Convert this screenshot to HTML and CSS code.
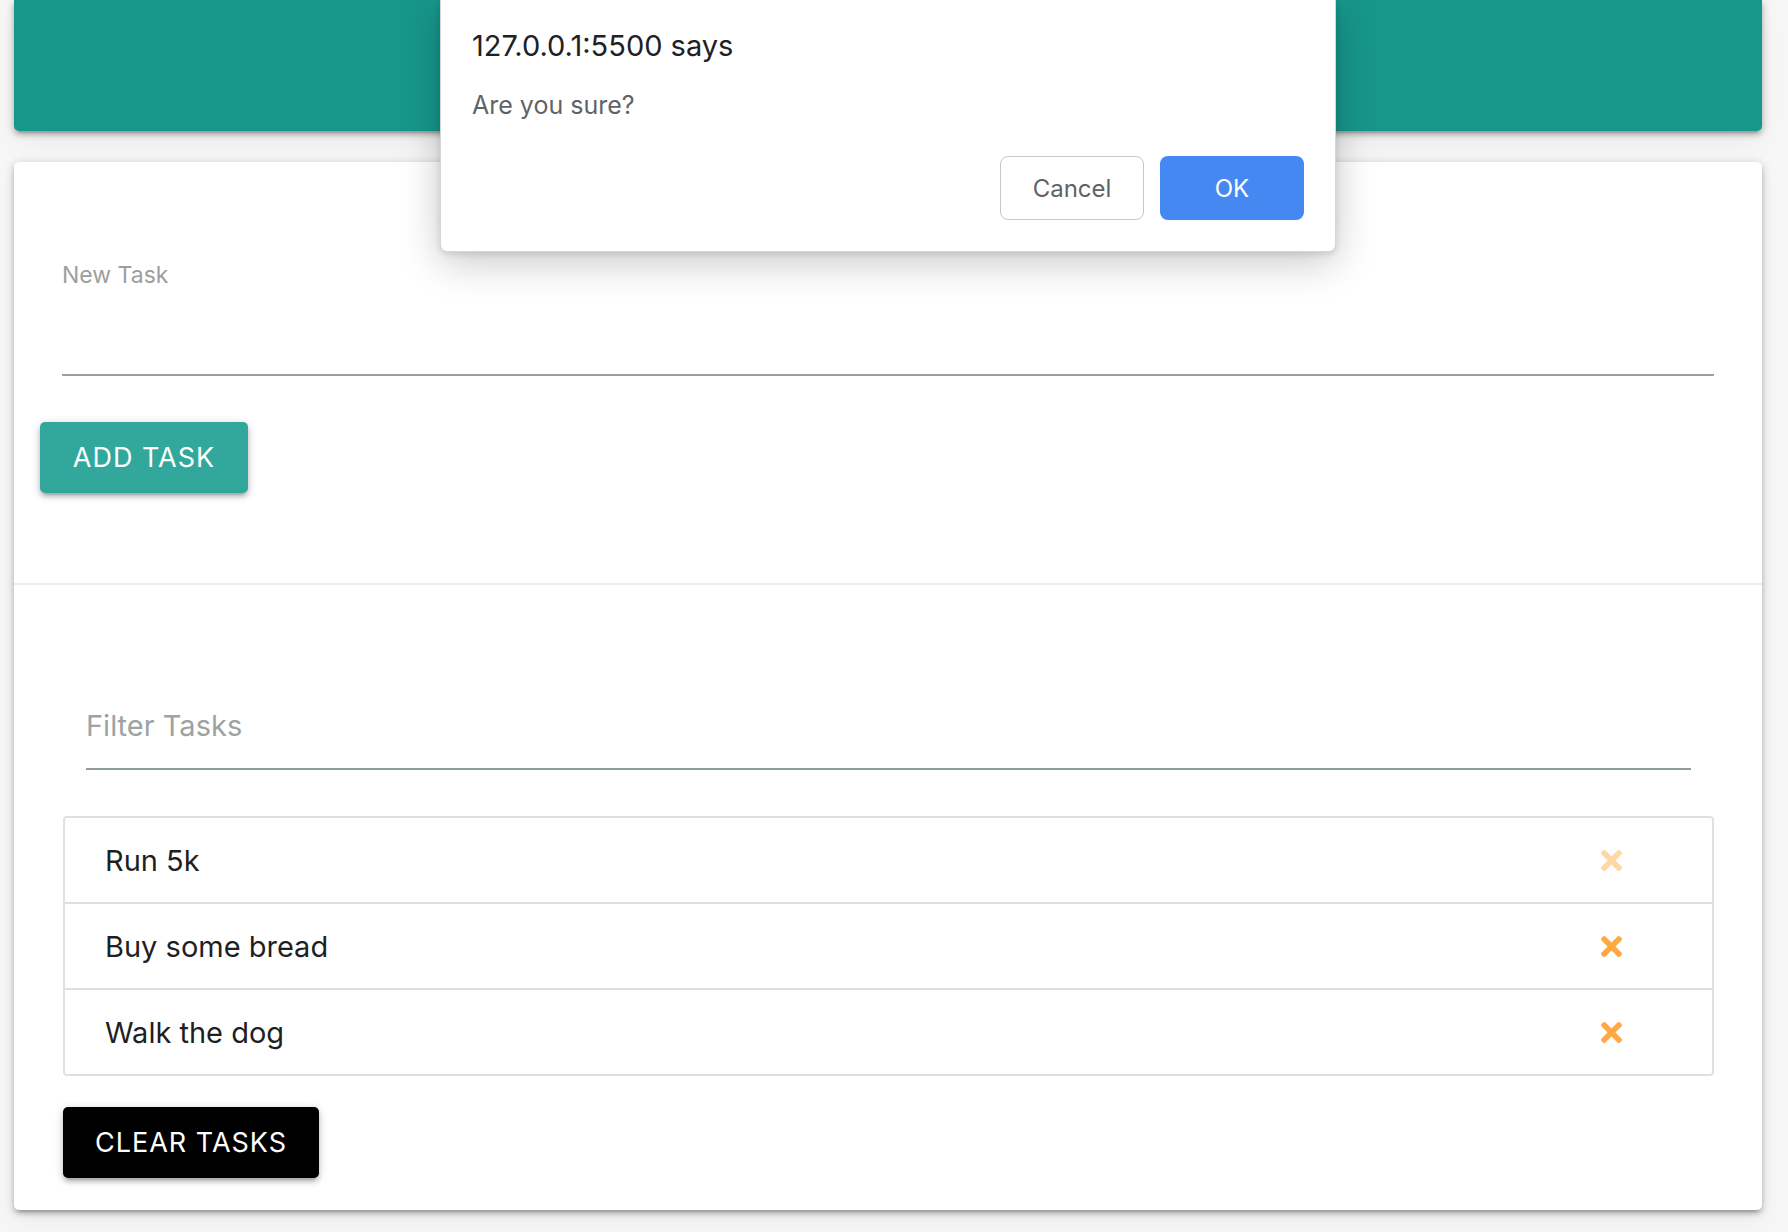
FILE: index.html
```html
<!DOCTYPE html>
<html lang="en">
<head>
<meta charset="utf-8">
<title>Task List</title>
<link rel="stylesheet" href="styles.css">
</head>
<body>
<div class="page">
  <nav class="header"></nav>
  <div class="card">
    <div class="card-content">
      <div class="input-field">
        <div class="field-label">New Task</div>
        <input class="field-input" type="text">
      </div>
      <button class="btn btn-teal">ADD TASK</button>
    </div>
    <div class="card-action">
      <div class="filter-field">
        <input class="filter-input" type="text" placeholder="Filter Tasks">
      </div>
      <ul class="collection">
        <li class="collection-item"><span>Run 5k</span><svg class="del faded" viewBox="0 80 352 352"><path d="M242.72 256l100.07-100.07c12.28-12.28 12.28-32.19 0-44.48l-22.24-22.24c-12.28-12.28-32.19-12.28-44.48 0L176 189.28 75.93 89.21c-12.28-12.28-32.19-12.28-44.48 0L9.21 111.45c-12.28 12.28-12.28 32.19 0 44.48L109.28 256 9.21 356.07c-12.28 12.28-12.28 32.19 0 44.48l22.24 22.24c12.28 12.28 32.2 12.28 44.48 0L176 322.72l100.07 100.07c12.28 12.28 32.2 12.28 44.48 0l22.24-22.24c12.28-12.28 12.28-32.19 0-44.48L242.72 256z"/></svg></li>
        <li class="collection-item"><span>Buy some bread</span><svg class="del" viewBox="0 80 352 352"><path d="M242.72 256l100.07-100.07c12.28-12.28 12.28-32.19 0-44.48l-22.24-22.24c-12.28-12.28-32.19-12.28-44.48 0L176 189.28 75.93 89.21c-12.28-12.28-32.19-12.28-44.48 0L9.21 111.45c-12.28 12.28-12.28 32.19 0 44.48L109.28 256 9.21 356.07c-12.28 12.28-12.28 32.19 0 44.48l22.24 22.24c12.28 12.28 32.2 12.28 44.48 0L176 322.72l100.07 100.07c12.28 12.28 32.2 12.28 44.48 0l22.24-22.24c12.28-12.28 12.28-32.19 0-44.48L242.72 256z"/></svg></li>
        <li class="collection-item"><span>Walk the dog</span><svg class="del" viewBox="0 80 352 352"><path d="M242.72 256l100.07-100.07c12.28-12.28 12.28-32.19 0-44.48l-22.24-22.24c-12.28-12.28-32.19-12.28-44.48 0L176 189.28 75.93 89.21c-12.28-12.28-32.19-12.28-44.48 0L9.21 111.45c-12.28 12.28-12.28 32.19 0 44.48L109.28 256 9.21 356.07c-12.28 12.28-12.28 32.19 0 44.48l22.24 22.24c12.28 12.28 32.2 12.28 44.48 0L176 322.72l100.07 100.07c12.28 12.28 32.2 12.28 44.48 0l22.24-22.24c12.28-12.28 12.28-32.19 0-44.48L242.72 256z"/></svg></li>
      </ul>
      <button class="btn btn-black">CLEAR TASKS</button>
    </div>
  </div>
</div>

<div class="dialog">
  <div class="dialog-title">127.0.0.1:5500 says</div>
  <div class="dialog-msg">Are you sure?</div>
  <div class="dialog-buttons">
    <button class="dbtn dbtn-cancel">Cancel</button>
    <button class="dbtn dbtn-ok">OK</button>
  </div>
</div>
</body>
</html>
```

FILE: styles.css
```css
html, body {
  margin: 0;
  padding: 0;
}
body {
  background: #f7f7f7;
  font-family: Inter, "Noto Sans", Roboto, sans-serif;
  color: rgba(0,0,0,0.87);
  height: 1232px;
  overflow: hidden;
}
.page {
  padding: 0 26px 0 14px;
}
.header {
  display: block;
  height: 131px;
  background: #17968a;
  border-radius: 0 0 5px 5px;
  box-shadow: 0 4px 4px rgba(0,0,0,0.14), 0 6px 2px -4px rgba(0,0,0,0.12), 0 2px 10px rgba(0,0,0,0.2), 0 10px 30px rgba(0,0,0,0.06);
}
.card {
  margin-top: 31px;
  background: #fff;
  border-radius: 5px;
  box-shadow: 0 4px 4px rgba(0,0,0,0.14), 0 6px 2px -4px rgba(0,0,0,0.12), 0 2px 10px rgba(0,0,0,0.2), 0 10px 30px rgba(0,0,0,0.05);
}
.card-content {
  padding: 48px 26px 90px;
}
.input-field {
  margin: 0 22px;
}
.field-label {
  margin-top: 50px;
  font-size: 23px;
  line-height: 30px;
  color: #9e9e9e;
}
.field-input {
  display: block;
  width: 100%;
  box-sizing: border-box;
  height: 86px;
  border: 0;
  border-bottom: 2px solid #9e9e9e;
  background: transparent;
  outline: none;
  padding: 0;
  font: inherit;
}
.btn {
  display: block;
  border: 0;
  border-radius: 5px;
  height: 71px;
  padding: 0;
  color: #fff;
  white-space: nowrap;
  font-family: Inter, "Noto Sans", Roboto, sans-serif;
  font-size: 27px;
  letter-spacing: 1px;
  box-shadow: 0 4px 4px rgba(0,0,0,0.14), 0 6px 2px -4px rgba(0,0,0,0.12), 0 2px 10px rgba(0,0,0,0.2);
  cursor: pointer;
}
.btn-teal {
  margin-top: 46px;
  width: 208px;
  background: #31a89b;
}
.btn-black {
  margin-top: 31px;
  width: 256px;
  background: #000;
}
.card-action {
  border-top: 2px solid #ececec;
  padding: 0 48px 32px 49px;
}
.filter-field {
  margin: 0 23px;
  padding-top: 110px;
}
.filter-input {
  display: block;
  width: 100%;
  box-sizing: border-box;
  height: 75px;
  padding: 0 0 13px;
  line-height: 60px;
  border: 0;
  border-bottom: 2px solid #8e9c9c;
  background: transparent;
  outline: none;
  font-family: Inter, "Noto Sans", Roboto, sans-serif;
  font-size: 29px;
  color: rgba(0,0,0,0.87);
}
.filter-input::placeholder {
  color: #9da3a3;
}
.collection {
  list-style: none;
  margin: 46px 0 0;
  padding: 0;
  border: 2px solid #e0e0e0;
  border-radius: 4px;
}
.collection-item {
  display: flex;
  align-items: center;
  justify-content: space-between;
  height: 84px;
  padding: 0 90px 0 40px;
  border-bottom: 2px solid #e0e0e0;
  font-size: 29px;
  color: #1f1f1f;
}
.collection-item:last-child {
  border-bottom: 0;
}
.del {
  width: 21px;
  height: 21px;
  fill: #ffa944;
}
.del.faded {
  fill: #ffd7a6;
}
.dialog {
  position: absolute;
  left: 440px;
  top: 0;
  width: 896px;
  height: 252px;
  box-sizing: border-box;
  background: #fff;
  border: 1px solid #d6d6d6;
  border-top: 0;
  border-radius: 0 0 7px 7px;
  box-shadow: 0 10px 40px rgba(0,0,0,0.22), 0 2px 6px rgba(0,0,0,0.12);
  padding: 0 31px 0 31px;
  font-family: Inter, "Noto Sans", Roboto, sans-serif;
}
.dialog-title {
  margin-top: 27px;
  font-size: 29px;
  line-height: 38px;
  color: #202124;
}
.dialog-msg {
  margin-top: 24px;
  font-size: 25px;
  line-height: 32px;
  color: #5f6368;
}
.dialog-buttons {
  display: flex;
  justify-content: flex-end;
  gap: 16px;
  margin-top: 35px;
}
.dbtn {
  width: 144px;
  height: 64px;
  border-radius: 8px;
  font-family: Inter, "Noto Sans", Roboto, sans-serif;
  font-size: 24px;
  cursor: pointer;
}
.dbtn-cancel {
  background: #fff;
  border: 1px solid #c8c8c8;
  color: #5f6368;
}
.dbtn-ok {
  background: #4688f1;
  border: 0;
  color: #fff;
}
```
